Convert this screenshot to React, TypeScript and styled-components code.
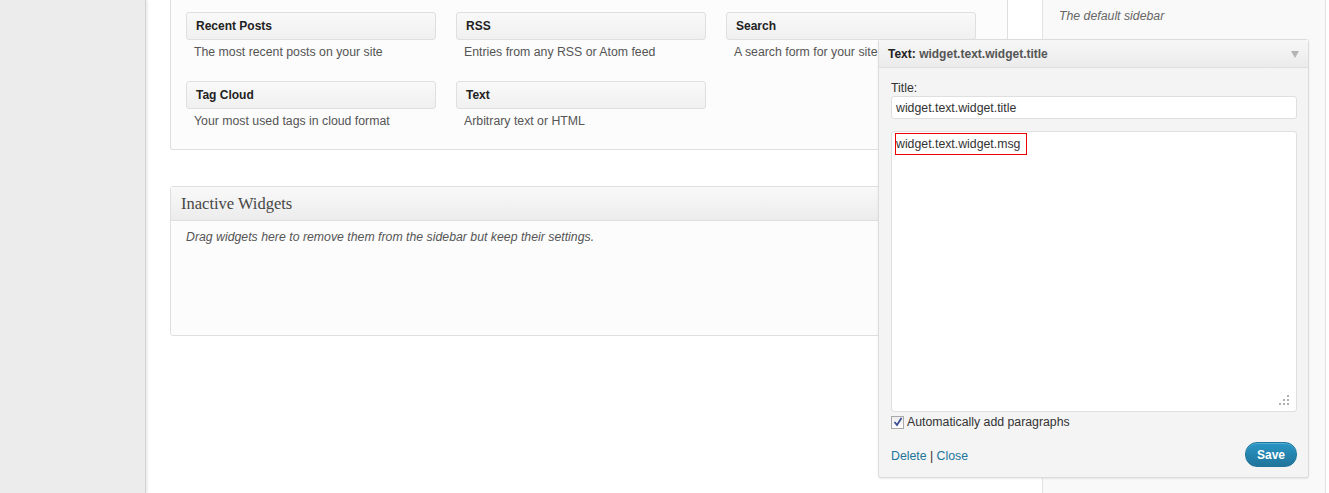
import React from "react";
import styled, { createGlobalStyle } from "styled-components";

const GlobalStyle = createGlobalStyle`
  html, body { margin: 0; padding: 0; background: #fff; }
  body { font-family: "Liberation Sans", Arial, sans-serif; color: #333; }
  * { box-sizing: border-box; }
`;

const Page = styled.div`
  position: relative;
  display: flex;
  height: 493px;
  overflow: hidden;
  background: #fff;
`;

const AdminMenu = styled.div`
  width: 146px;
  flex-shrink: 0;
  background: #ececec;
  border-right: 1px solid #d4d4d4;
  box-shadow: 1px 0 3px rgba(0, 0, 0, 0.12);
  z-index: 1;
`;

const Content = styled.div`
  display: flex;
  flex: 1;
  padding-left: 24px;
`;

const MainCol = styled.div`
  width: 838px;
  flex-shrink: 0;
  display: flex;
  flex-direction: column;
`;

const SidebarCol = styled.div`
  width: 284px;
  flex-shrink: 0;
  margin-left: 34px;
  background: #f9f9f9;
  border-left: 1px solid #e3e3e3;
  border-right: 1px solid #e3e3e3;
  padding: 8px 16px;
`;

const SidebarDesc = styled.div`
  font-size: 12.3px;
  line-height: 16px;
  font-style: italic;
  color: #666;
`;

const AvailablePanel = styled.div`
  background: #fcfcfc;
  border: 1px solid #dfdfdf;
  border-top: none;
  border-radius: 0 0 3px 3px;
  padding: 12px 15px 20px;
  display: grid;
  grid-template-columns: repeat(3, 250px);
  column-gap: 20px;
  row-gap: 21px;
`;

const Widget = styled.div`
  display: flex;
  flex-direction: column;
`;

const WidgetTitle = styled.div`
  height: 28px;
  border: 1px solid #dfdfdf;
  border-radius: 3px;
  background: linear-gradient(to bottom, #f9f9f9, #f0f0f0);
  padding-left: 9px;
  display: flex;
  align-items: center;
  font-size: 12px;
  font-weight: bold;
  color: #222;
`;

const WidgetDesc = styled.div`
  margin-top: 4px;
  padding-left: 8px;
  font-size: 12.3px;
  line-height: 16px;
  color: #555;
  white-space: nowrap;
`;

const InactivePanel = styled.div`
  margin-top: 36px;
  border: 1px solid #dfdfdf;
  border-radius: 3px;
  background: #fcfcfc;
`;

const InactiveHeader = styled.div`
  height: 34px;
  border-bottom: 1px solid #dfdfdf;
  background: linear-gradient(to bottom, #f9f9f9, #ececec);
  padding-left: 10px;
  display: flex;
  align-items: center;
  font-family: "Liberation Serif", "Times New Roman", serif;
  font-size: 16.5px;
  color: #464646;
`;

const InactiveBody = styled.div`
  height: 114px;
  padding: 8px 15px;
  font-size: 12.3px;
  line-height: 16px;
  font-style: italic;
  color: #555;
`;

const Popup = styled.div`
  position: absolute;
  left: 878px;
  top: 39px;
  width: 431px;
  border: 1px solid #dcdcdc;
  border-radius: 3px;
  background: #f4f4f4;
  box-shadow: 0 1px 2px rgba(0, 0, 0, 0.08);
  z-index: 2;
`;

const PopupHeader = styled.div`
  height: 28px;
  border-bottom: 1px solid #dfdfdf;
  background: linear-gradient(to bottom, #f7f7f7, #ebebeb);
  padding: 0 9px;
  display: flex;
  align-items: center;
  justify-content: space-between;
  font-size: 12px;
  font-weight: bold;
  color: #222;
`;

const HeaderSub = styled.span`
  color: #555;
`;

const Arrow = styled.span`
  width: 0;
  height: 0;
  border-left: 4px solid transparent;
  border-right: 4px solid transparent;
  border-top: 7px solid #b4b4b4;
  margin-top: 2px;
`;

const PopupBody = styled.div`
  padding: 12px 11px 10px 12px;
  display: flex;
  flex-direction: column;
`;

const Label = styled.div`
  font-size: 12.3px;
  line-height: 16px;
  color: #333;
`;

const TextInput = styled.div`
  height: 23px;
  background: #fff;
  border: 1px solid #dfdfdf;
  border-radius: 3px;
  padding: 0 4px;
  display: flex;
  align-items: center;
  font-size: 12.3px;
  color: #333;
`;

const TextArea = styled.div`
  position: relative;
  margin-top: 12px;
  height: 281px;
  background: #fff;
  border: 1px solid #dfdfdf;
  border-radius: 3px;
  padding: 1px 3px;
`;

const Marked = styled.span`
  display: inline-flex;
  align-items: center;
  width: 132px;
  height: 22px;
  border: 1px solid #e00;
  font-size: 12.3px;
  color: #333;
`;

const Grip = styled.svg`
  position: absolute;
  right: 6px;
  bottom: 5px;
`;

const CheckRow = styled.label`
  margin-top: 3px;
  height: 14px;
  display: flex;
  align-items: center;
  gap: 3px;
  font-size: 12.3px;
  color: #333;
`;

const CheckBox = styled.span`
  width: 13px;
  height: 13px;
  border: 1px solid #a9a9a9;
  background: linear-gradient(to bottom, #ececec, #fff);
  display: flex;
  align-items: center;
  justify-content: center;
`;

const Footer = styled.div`
  margin-top: 13px;
  height: 25px;
  display: flex;
  align-items: center;
  justify-content: space-between;
`;

const Links = styled.div`
  font-size: 12.3px;
  color: #333;
  margin-top: 3px;
`;

const Link = styled.a`
  color: #21759b;
  text-decoration: none;
`;

const SaveButton = styled.button`
  width: 52px;
  height: 25px;
  border-radius: 12px;
  border: 1px solid #21759b;
  background: linear-gradient(to bottom, #2a95c5, #21759b);
  color: #fff;
  font-family: "Liberation Sans", Arial, sans-serif;
  font-size: 12px;
  font-weight: bold;
  padding: 0;
  box-shadow: inset 0 1px 0 rgba(120, 200, 230, 0.5);
`;

const widgets = [
  { title: "Recent Posts", desc: "The most recent posts on your site" },
  { title: "RSS", desc: "Entries from any RSS or Atom feed" },
  { title: "Search", desc: "A search form for your site" },
  { title: "Tag Cloud", desc: "Your most used tags in cloud format" },
  { title: "Text", desc: "Arbitrary text or HTML" },
];

export default function App() {
  return (
    <>
      <GlobalStyle />
      <Page>
        <AdminMenu />
        <Content>
          <MainCol>
            <AvailablePanel>
              {widgets.map((w) => (
                <Widget key={w.title}>
                  <WidgetTitle>{w.title}</WidgetTitle>
                  <WidgetDesc>{w.desc}</WidgetDesc>
                </Widget>
              ))}
            </AvailablePanel>
            <InactivePanel>
              <InactiveHeader>Inactive Widgets</InactiveHeader>
              <InactiveBody>
                Drag widgets here to remove them from the sidebar but keep their settings.
              </InactiveBody>
            </InactivePanel>
          </MainCol>
          <SidebarCol>
            <SidebarDesc>The default sidebar</SidebarDesc>
          </SidebarCol>
        </Content>
        <Popup>
          <PopupHeader>
            <span>
              Text: <HeaderSub>widget.text.widget.title</HeaderSub>
            </span>
            <Arrow />
          </PopupHeader>
          <PopupBody>
            <Label>Title:</Label>
            <TextInput>widget.text.widget.title</TextInput>
            <TextArea>
              <Marked>widget.text.widget.msg</Marked>
              <Grip width="11" height="11" viewBox="0 0 11 11">
                <g fill="#b0b0b0">
                  <rect x="8" y="0" width="2" height="2" />
                  <rect x="4" y="4" width="2" height="2" />
                  <rect x="8" y="4" width="2" height="2" />
                  <rect x="0" y="8" width="2" height="2" />
                  <rect x="4" y="8" width="2" height="2" />
                  <rect x="8" y="8" width="2" height="2" />
                </g>
              </Grip>
            </TextArea>
            <CheckRow>
              <CheckBox>
                <svg width="10" height="10" viewBox="0 0 10 10">
                  <path d="M1.5 5 L4 8 L8.5 1" fill="none" stroke="#3d4f94" strokeWidth="1.8" />
                </svg>
              </CheckBox>
              Automatically add paragraphs
            </CheckRow>
            <Footer>
              <Links>
                <Link href="#">Delete</Link> | <Link href="#">Close</Link>
              </Links>
              <SaveButton>Save</SaveButton>
            </Footer>
          </PopupBody>
        </Popup>
      </Page>
    </>
  );
}
